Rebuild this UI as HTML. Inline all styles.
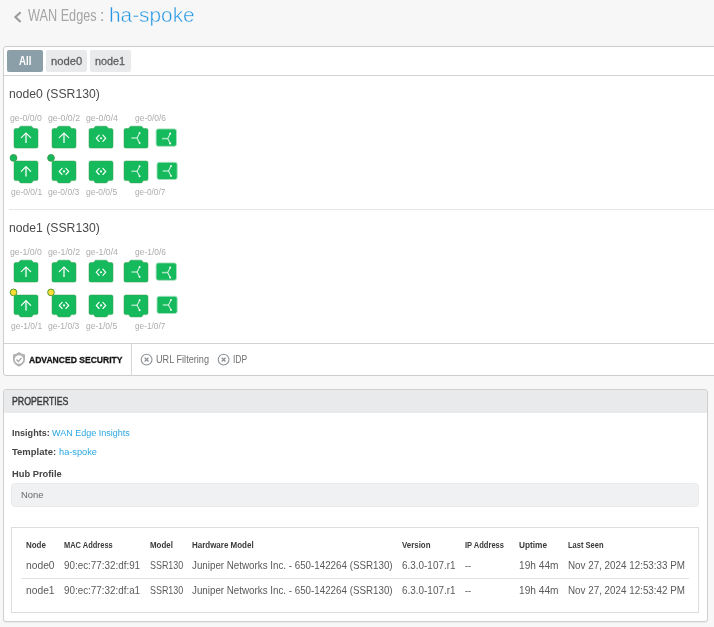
<!DOCTYPE html>
<html><head><meta charset="utf-8"><title>WAN Edges : ha-spoke</title>
<style>
html,body{margin:0;padding:0;}
body{width:714px;height:627px;overflow:hidden;background:#f7f7f7;position:relative;font-family:"Liberation Sans",sans-serif;}
.abs{position:absolute;}
.t{position:absolute;white-space:pre;line-height:1;transform-origin:0 0;font-family:"Liberation Sans",sans-serif;}
.panel1{left:3px;top:46px;width:720px;height:330px;background:#fff;border:1px solid #cdcdcd;border-radius:3px;box-sizing:border-box;}
.hl{position:absolute;height:1px;background:#d0d0d0;}
.tab{position:absolute;top:50px;height:22px;border-radius:2px;background:#e9eaeb;}
.panel2{left:3px;top:389px;width:705px;height:233px;background:#fff;border:1px solid #cfcfcf;border-radius:3px;box-sizing:border-box;box-shadow:0 1px 1px rgba(0,0,0,0.05);}
.phead{left:4px;top:390px;width:703px;height:23px;background:#e9eaec;border-radius:2px 2px 0 0;}
.field{left:11px;top:483px;width:688px;height:24px;background:#f0f1f2;border:1px solid #ebebeb;border-radius:4px;box-sizing:border-box;}
.tbl{left:11px;top:527px;width:688px;height:86px;border:1px solid #dedede;box-sizing:border-box;background:#fff;}
</style></head><body>
<div class="abs panel1"></div>
<div class="hl" style="left:4px;top:75px;width:710px;background:#d2d2d2;"></div>
<div class="tab" style="left:7px;width:36px;background:#8b9fa9;"></div>
<div class="tab" style="left:46px;width:41px;"></div>
<div class="tab" style="left:90px;width:41px;"></div>
<div class="hl" style="left:9px;top:209px;width:705px;background:#e6e6e6;"></div>
<div class="hl" style="left:4px;top:343px;width:710px;background:#d2d2d2;"></div>
<div class="abs" style="left:131px;top:344px;width:1px;height:32px;background:#d6d6d6;"></div>
<div class="abs panel2"></div>
<div class="abs phead"></div>
<div class="abs field"></div>
<div class="abs tbl"></div>
<div class="hl" style="left:21px;top:578px;width:668px;background:#e2e2e2;"></div>
<svg class="abs" style="left:0;top:0" width="714" height="627" viewBox="0 0 714 627">
<path transform="translate(14,126.2)" d="M0,4 Q0,2.3 1.7,2.3 L4.6,2.3 L5.7,0.7 Q6.1,0 7,0 L17,0 Q17.9,0 18.3,0.7 L19.4,2.3 L22.3,2.3 Q24,2.3 24,4 L24,20.2 Q24,21.9 22.3,21.9 L1.7,21.9 Q0,21.9 0,20.2 Z" fill="#15ba5c" stroke="#3d9e55" stroke-width="0.5"/>
<path transform="translate(52,126.2)" d="M0,4 Q0,2.3 1.7,2.3 L4.6,2.3 L5.7,0.7 Q6.1,0 7,0 L17,0 Q17.9,0 18.3,0.7 L19.4,2.3 L22.3,2.3 Q24,2.3 24,4 L24,20.2 Q24,21.9 22.3,21.9 L1.7,21.9 Q0,21.9 0,20.2 Z" fill="#15ba5c" stroke="#3d9e55" stroke-width="0.5"/>
<path transform="translate(89,126.2)" d="M0,4 Q0,2.3 1.7,2.3 L4.6,2.3 L5.7,0.7 Q6.1,0 7,0 L17,0 Q17.9,0 18.3,0.7 L19.4,2.3 L22.3,2.3 Q24,2.3 24,4 L24,20.2 Q24,21.9 22.3,21.9 L1.7,21.9 Q0,21.9 0,20.2 Z" fill="#15ba5c" stroke="#3d9e55" stroke-width="0.5"/>
<path transform="translate(124,126.2)" d="M0,4 Q0,2.3 1.7,2.3 L4.6,2.3 L5.7,0.7 Q6.1,0 7,0 L17,0 Q17.9,0 18.3,0.7 L19.4,2.3 L22.3,2.3 Q24,2.3 24,4 L24,20.2 Q24,21.9 22.3,21.9 L1.7,21.9 Q0,21.9 0,20.2 Z" fill="#15ba5c" stroke="#3d9e55" stroke-width="0.5"/>
<path transform="translate(14,182.9) scale(1,-1)" d="M0,4 Q0,2.3 1.7,2.3 L4.6,2.3 L5.7,0.7 Q6.1,0 7,0 L17,0 Q17.9,0 18.3,0.7 L19.4,2.3 L22.3,2.3 Q24,2.3 24,4 L24,20.2 Q24,21.9 22.3,21.9 L1.7,21.9 Q0,21.9 0,20.2 Z" fill="#15ba5c" stroke="#3d9e55" stroke-width="0.5"/>
<path transform="translate(52,182.9) scale(1,-1)" d="M0,4 Q0,2.3 1.7,2.3 L4.6,2.3 L5.7,0.7 Q6.1,0 7,0 L17,0 Q17.9,0 18.3,0.7 L19.4,2.3 L22.3,2.3 Q24,2.3 24,4 L24,20.2 Q24,21.9 22.3,21.9 L1.7,21.9 Q0,21.9 0,20.2 Z" fill="#15ba5c" stroke="#3d9e55" stroke-width="0.5"/>
<path transform="translate(89,182.9) scale(1,-1)" d="M0,4 Q0,2.3 1.7,2.3 L4.6,2.3 L5.7,0.7 Q6.1,0 7,0 L17,0 Q17.9,0 18.3,0.7 L19.4,2.3 L22.3,2.3 Q24,2.3 24,4 L24,20.2 Q24,21.9 22.3,21.9 L1.7,21.9 Q0,21.9 0,20.2 Z" fill="#15ba5c" stroke="#3d9e55" stroke-width="0.5"/>
<path transform="translate(124,182.9) scale(1,-1)" d="M0,4 Q0,2.3 1.7,2.3 L4.6,2.3 L5.7,0.7 Q6.1,0 7,0 L17,0 Q17.9,0 18.3,0.7 L19.4,2.3 L22.3,2.3 Q24,2.3 24,4 L24,20.2 Q24,21.9 22.3,21.9 L1.7,21.9 Q0,21.9 0,20.2 Z" fill="#15ba5c" stroke="#3d9e55" stroke-width="0.5"/>
<rect x="156.1" y="128.9" width="20.4" height="17.4" rx="2.2" fill="#15ba5c" stroke="#a5dfbd" stroke-width="0.9"/>
<rect x="157" y="162.3" width="20.2" height="17.2" rx="2.2" fill="#15ba5c" stroke="#a5dfbd" stroke-width="0.9"/>
<path d="M26,133.4 L26,143.0" stroke="#ffffff" stroke-opacity="0.62" stroke-width="2.1" fill="none"/><path d="M21.3,137.7 L26,133.0 L30.7,137.7" stroke="#fff" stroke-width="1.15" fill="none" stroke-linecap="round"/>
<path d="M64,133.4 L64,143.0" stroke="#ffffff" stroke-opacity="0.62" stroke-width="2.1" fill="none"/><path d="M59.3,137.7 L64,133.0 L68.7,137.7" stroke="#fff" stroke-width="1.15" fill="none" stroke-linecap="round"/>
<path d="M99.1,135.1 L96.3,138.2 L99.1,141.29999999999998 M102.9,135.1 L105.7,138.2 L102.9,141.29999999999998" stroke="#fff" stroke-width="1.15" fill="none" stroke-linecap="round"/><circle cx="101" cy="138.2" r="1.05" fill="#fff"/>
<path d="M131.4,138.0 L137.1,138.0" stroke="#fff" stroke-opacity="0.62" stroke-width="1.5" fill="none"/><path d="M139.6,133.1 L137.1,138.0 L139.6,142.9" stroke="#fff" stroke-opacity="0.8" stroke-width="1.05" fill="none"/><circle cx="139.6" cy="132.9" r="0.95" fill="#fff"/><circle cx="139.6" cy="142.9" r="0.95" fill="#fff"/>
<path d="M162.0,138.6 L167.7,138.6" stroke="#fff" stroke-opacity="0.62" stroke-width="1.5" fill="none"/><path d="M170.2,133.7 L167.7,138.6 L170.2,143.5" stroke="#fff" stroke-opacity="0.8" stroke-width="1.05" fill="none"/><circle cx="170.2" cy="133.5" r="0.95" fill="#fff"/><circle cx="170.2" cy="143.5" r="0.95" fill="#fff"/>
<path d="M26,167.0 L26,176.6" stroke="#ffffff" stroke-opacity="0.62" stroke-width="2.1" fill="none"/><path d="M21.3,171.29999999999998 L26,166.6 L30.7,171.29999999999998" stroke="#fff" stroke-width="1.15" fill="none" stroke-linecap="round"/>
<path d="M62.1,168.3 L59.3,171.4 L62.1,174.5 M65.9,168.3 L68.7,171.4 L65.9,174.5" stroke="#fff" stroke-width="1.15" fill="none" stroke-linecap="round"/><circle cx="64" cy="171.4" r="1.05" fill="#fff"/>
<path d="M99.1,168.3 L96.3,171.4 L99.1,174.5 M102.9,168.3 L105.7,171.4 L102.9,174.5" stroke="#fff" stroke-width="1.15" fill="none" stroke-linecap="round"/><circle cx="101" cy="171.4" r="1.05" fill="#fff"/>
<path d="M131.4,171.3 L137.1,171.3" stroke="#fff" stroke-opacity="0.62" stroke-width="1.5" fill="none"/><path d="M139.6,166.4 L137.1,171.3 L139.6,176.20000000000002" stroke="#fff" stroke-opacity="0.8" stroke-width="1.05" fill="none"/><circle cx="139.6" cy="166.20000000000002" r="0.95" fill="#fff"/><circle cx="139.6" cy="176.20000000000002" r="0.95" fill="#fff"/>
<path d="M162.8,171 L168.5,171" stroke="#fff" stroke-opacity="0.62" stroke-width="1.5" fill="none"/><path d="M171.0,166.1 L168.5,171 L171.0,175.9" stroke="#fff" stroke-opacity="0.8" stroke-width="1.05" fill="none"/><circle cx="171.0" cy="165.9" r="0.95" fill="#fff"/><circle cx="171.0" cy="175.9" r="0.95" fill="#fff"/>
<circle cx="13.5" cy="157.9" r="3.35" fill="#15ba5c" stroke="#3f9a4f" stroke-width="1"/>
<circle cx="51" cy="157.9" r="3.35" fill="#15ba5c" stroke="#3f9a4f" stroke-width="1"/>
<path transform="translate(14,260.2)" d="M0,4 Q0,2.3 1.7,2.3 L4.6,2.3 L5.7,0.7 Q6.1,0 7,0 L17,0 Q17.9,0 18.3,0.7 L19.4,2.3 L22.3,2.3 Q24,2.3 24,4 L24,20.2 Q24,21.9 22.3,21.9 L1.7,21.9 Q0,21.9 0,20.2 Z" fill="#15ba5c" stroke="#3d9e55" stroke-width="0.5"/>
<path transform="translate(52,260.2)" d="M0,4 Q0,2.3 1.7,2.3 L4.6,2.3 L5.7,0.7 Q6.1,0 7,0 L17,0 Q17.9,0 18.3,0.7 L19.4,2.3 L22.3,2.3 Q24,2.3 24,4 L24,20.2 Q24,21.9 22.3,21.9 L1.7,21.9 Q0,21.9 0,20.2 Z" fill="#15ba5c" stroke="#3d9e55" stroke-width="0.5"/>
<path transform="translate(89,260.2)" d="M0,4 Q0,2.3 1.7,2.3 L4.6,2.3 L5.7,0.7 Q6.1,0 7,0 L17,0 Q17.9,0 18.3,0.7 L19.4,2.3 L22.3,2.3 Q24,2.3 24,4 L24,20.2 Q24,21.9 22.3,21.9 L1.7,21.9 Q0,21.9 0,20.2 Z" fill="#15ba5c" stroke="#3d9e55" stroke-width="0.5"/>
<path transform="translate(124,260.2)" d="M0,4 Q0,2.3 1.7,2.3 L4.6,2.3 L5.7,0.7 Q6.1,0 7,0 L17,0 Q17.9,0 18.3,0.7 L19.4,2.3 L22.3,2.3 Q24,2.3 24,4 L24,20.2 Q24,21.9 22.3,21.9 L1.7,21.9 Q0,21.9 0,20.2 Z" fill="#15ba5c" stroke="#3d9e55" stroke-width="0.5"/>
<path transform="translate(14,316.9) scale(1,-1)" d="M0,4 Q0,2.3 1.7,2.3 L4.6,2.3 L5.7,0.7 Q6.1,0 7,0 L17,0 Q17.9,0 18.3,0.7 L19.4,2.3 L22.3,2.3 Q24,2.3 24,4 L24,20.2 Q24,21.9 22.3,21.9 L1.7,21.9 Q0,21.9 0,20.2 Z" fill="#15ba5c" stroke="#3d9e55" stroke-width="0.5"/>
<path transform="translate(52,316.9) scale(1,-1)" d="M0,4 Q0,2.3 1.7,2.3 L4.6,2.3 L5.7,0.7 Q6.1,0 7,0 L17,0 Q17.9,0 18.3,0.7 L19.4,2.3 L22.3,2.3 Q24,2.3 24,4 L24,20.2 Q24,21.9 22.3,21.9 L1.7,21.9 Q0,21.9 0,20.2 Z" fill="#15ba5c" stroke="#3d9e55" stroke-width="0.5"/>
<path transform="translate(89,316.9) scale(1,-1)" d="M0,4 Q0,2.3 1.7,2.3 L4.6,2.3 L5.7,0.7 Q6.1,0 7,0 L17,0 Q17.9,0 18.3,0.7 L19.4,2.3 L22.3,2.3 Q24,2.3 24,4 L24,20.2 Q24,21.9 22.3,21.9 L1.7,21.9 Q0,21.9 0,20.2 Z" fill="#15ba5c" stroke="#3d9e55" stroke-width="0.5"/>
<path transform="translate(124,316.9) scale(1,-1)" d="M0,4 Q0,2.3 1.7,2.3 L4.6,2.3 L5.7,0.7 Q6.1,0 7,0 L17,0 Q17.9,0 18.3,0.7 L19.4,2.3 L22.3,2.3 Q24,2.3 24,4 L24,20.2 Q24,21.9 22.3,21.9 L1.7,21.9 Q0,21.9 0,20.2 Z" fill="#15ba5c" stroke="#3d9e55" stroke-width="0.5"/>
<rect x="156.1" y="262.9" width="20.4" height="17.4" rx="2.2" fill="#15ba5c" stroke="#a5dfbd" stroke-width="0.9"/>
<rect x="157" y="296.3" width="20.2" height="17.2" rx="2.2" fill="#15ba5c" stroke="#a5dfbd" stroke-width="0.9"/>
<path d="M26,267.4 L26,277.0" stroke="#ffffff" stroke-opacity="0.62" stroke-width="2.1" fill="none"/><path d="M21.3,271.7 L26,267.0 L30.7,271.7" stroke="#fff" stroke-width="1.15" fill="none" stroke-linecap="round"/>
<path d="M64,267.4 L64,277.0" stroke="#ffffff" stroke-opacity="0.62" stroke-width="2.1" fill="none"/><path d="M59.3,271.7 L64,267.0 L68.7,271.7" stroke="#fff" stroke-width="1.15" fill="none" stroke-linecap="round"/>
<path d="M99.1,269.09999999999997 L96.3,272.2 L99.1,275.3 M102.9,269.09999999999997 L105.7,272.2 L102.9,275.3" stroke="#fff" stroke-width="1.15" fill="none" stroke-linecap="round"/><circle cx="101" cy="272.2" r="1.05" fill="#fff"/>
<path d="M131.4,272.0 L137.1,272.0" stroke="#fff" stroke-opacity="0.62" stroke-width="1.5" fill="none"/><path d="M139.6,267.1 L137.1,272.0 L139.6,276.9" stroke="#fff" stroke-opacity="0.8" stroke-width="1.05" fill="none"/><circle cx="139.6" cy="266.9" r="0.95" fill="#fff"/><circle cx="139.6" cy="276.9" r="0.95" fill="#fff"/>
<path d="M162.0,272.59999999999997 L167.7,272.59999999999997" stroke="#fff" stroke-opacity="0.62" stroke-width="1.5" fill="none"/><path d="M170.2,267.7 L167.7,272.59999999999997 L170.2,277.49999999999994" stroke="#fff" stroke-opacity="0.8" stroke-width="1.05" fill="none"/><circle cx="170.2" cy="267.49999999999994" r="0.95" fill="#fff"/><circle cx="170.2" cy="277.49999999999994" r="0.95" fill="#fff"/>
<path d="M26,301.0 L26,310.6" stroke="#ffffff" stroke-opacity="0.62" stroke-width="2.1" fill="none"/><path d="M21.3,305.3 L26,300.6 L30.7,305.3" stroke="#fff" stroke-width="1.15" fill="none" stroke-linecap="round"/>
<path d="M62.1,302.29999999999995 L59.3,305.4 L62.1,308.5 M65.9,302.29999999999995 L68.7,305.4 L65.9,308.5" stroke="#fff" stroke-width="1.15" fill="none" stroke-linecap="round"/><circle cx="64" cy="305.4" r="1.05" fill="#fff"/>
<path d="M99.1,302.29999999999995 L96.3,305.4 L99.1,308.5 M102.9,302.29999999999995 L105.7,305.4 L102.9,308.5" stroke="#fff" stroke-width="1.15" fill="none" stroke-linecap="round"/><circle cx="101" cy="305.4" r="1.05" fill="#fff"/>
<path d="M131.4,305.3 L137.1,305.3" stroke="#fff" stroke-opacity="0.62" stroke-width="1.5" fill="none"/><path d="M139.6,300.40000000000003 L137.1,305.3 L139.6,310.2" stroke="#fff" stroke-opacity="0.8" stroke-width="1.05" fill="none"/><circle cx="139.6" cy="300.2" r="0.95" fill="#fff"/><circle cx="139.6" cy="310.2" r="0.95" fill="#fff"/>
<path d="M162.8,305 L168.5,305" stroke="#fff" stroke-opacity="0.62" stroke-width="1.5" fill="none"/><path d="M171.0,300.1 L168.5,305 L171.0,309.9" stroke="#fff" stroke-opacity="0.8" stroke-width="1.05" fill="none"/><circle cx="171.0" cy="299.9" r="0.95" fill="#fff"/><circle cx="171.0" cy="309.9" r="0.95" fill="#fff"/>
<circle cx="13.5" cy="292.4" r="3.35" fill="#fbdc33" stroke="#559c38" stroke-width="1"/>
<circle cx="51" cy="292.4" r="3.35" fill="#fbdc33" stroke="#559c38" stroke-width="1"/>
</svg>

<svg class="abs" style="left:13px;top:10px" width="10" height="14" viewBox="0 0 10 14"><path d="M7.6,2.2 L2.4,7.1 L7.6,12" stroke="#9a9a9a" stroke-width="2.1" fill="none"/></svg>
<svg class="abs" style="left:11px;top:350px" width="16" height="18" viewBox="0 0 16 18"><path d="M8,2.1 Q10.6,4.3 14,4.4 L14,9.4 Q14,13.8 8,16.8 Q2,13.8 2,9.4 L2,4.4 Q5.4,4.3 8,2.1 Z" fill="#b2b2b2"/><circle cx="8" cy="9.4" r="4.25" fill="#fff"/><path d="M5.5,9.5 L7.3,11.4 L10.6,7.9" stroke="#a6a6a6" stroke-width="1.35" fill="none"/></svg>
<svg class="abs" style="left:140px;top:353px" width="14" height="14" viewBox="0 0 14 14"><circle cx="6.6" cy="6.6" r="5.4" fill="none" stroke="#8d9398" stroke-width="1.1"/><path d="M4.7,4.7 L8.5,8.5 M8.5,4.7 L4.7,8.5" stroke="#8a9096" stroke-width="1.25"/></svg>
<svg class="abs" style="left:217px;top:353px" width="14" height="14" viewBox="0 0 14 14"><circle cx="6.6" cy="6.6" r="5.4" fill="none" stroke="#8d9398" stroke-width="1.1"/><path d="M4.7,4.7 L8.5,8.5 M8.5,4.7 L4.7,8.5" stroke="#8a9096" stroke-width="1.25"/></svg>

<div id="txt" style="position:absolute;left:0;top:0;width:714px;height:627px;will-change:transform;">
<span class="t" id="t0" style="left:28.40px;top:7.80px;font-size:16px;font-weight:400;color:#a6a6a6;transform:scaleX(0.7926);">WAN Edges</span>
<span class="t" id="t1" style="left:100.20px;top:7.80px;font-size:15.6px;font-weight:400;color:#9c9c9c;transform:scaleX(1.0129);">:</span>
<span class="t" id="t2" style="left:108.90px;top:5.70px;font-size:19.8px;font-weight:400;color:#2496e3;transform:scaleX(1.0529);-webkit-text-stroke:0.45px #f7f7f7;">ha-spoke</span>
<span class="t" id="t3" style="left:18.60px;top:55.90px;font-size:11.9px;font-weight:700;color:#ffffff;transform:scaleX(0.8156);">All</span>
<span class="t" id="t4" style="left:51.20px;top:55.90px;font-size:11.8px;font-weight:400;color:#5e5e5e;transform:scaleX(0.9509);-webkit-text-stroke:0.3px #5e5e5e;">node0</span>
<span class="t" id="t5" style="left:94.90px;top:55.90px;font-size:11.8px;font-weight:400;color:#5e5e5e;transform:scaleX(0.9143);-webkit-text-stroke:0.3px #5e5e5e;">node1</span>
<span class="t" id="t6" style="left:9.20px;top:87.20px;font-size:13.5px;font-weight:400;color:#4a4a4a;transform:scaleX(0.9028);">node0 (SSR130)</span>
<span class="t" id="t7" style="left:9.20px;top:221.20px;font-size:13.5px;font-weight:400;color:#4a4a4a;transform:scaleX(0.9028);">node1 (SSR130)</span>
<span class="t" id="t8" style="left:10.30px;top:112.70px;font-size:9.5px;font-weight:400;color:#acacac;transform:scaleX(0.9118);">ge-0/0/0</span>
<span class="t" id="t9" style="left:10.50px;top:186.90px;font-size:9.5px;font-weight:400;color:#acacac;transform:scaleX(0.8918);">ge-0/0/1</span>
<span class="t" id="t10" style="left:48.00px;top:112.70px;font-size:9.5px;font-weight:400;color:#acacac;transform:scaleX(0.9176);">ge-0/0/2</span>
<span class="t" id="t11" style="left:48.20px;top:186.90px;font-size:9.5px;font-weight:400;color:#acacac;transform:scaleX(0.8975);">ge-0/0/3</span>
<span class="t" id="t12" style="left:85.60px;top:112.70px;font-size:9.5px;font-weight:400;color:#acacac;transform:scaleX(0.9147);">ge-0/0/4</span>
<span class="t" id="t13" style="left:85.80px;top:186.90px;font-size:9.5px;font-weight:400;color:#acacac;transform:scaleX(0.8946);">ge-0/0/5</span>
<span class="t" id="t14" style="left:135.00px;top:112.70px;font-size:9.5px;font-weight:400;color:#acacac;transform:scaleX(0.8889);">ge-0/0/6</span>
<span class="t" id="t15" style="left:135.20px;top:186.90px;font-size:9.5px;font-weight:400;color:#acacac;transform:scaleX(0.8688);">ge-0/0/7</span>
<span class="t" id="t16" style="left:10.30px;top:246.70px;font-size:9.5px;font-weight:400;color:#acacac;transform:scaleX(0.9118);">ge-1/0/0</span>
<span class="t" id="t17" style="left:10.50px;top:320.90px;font-size:9.5px;font-weight:400;color:#acacac;transform:scaleX(0.8918);">ge-1/0/1</span>
<span class="t" id="t18" style="left:48.00px;top:246.70px;font-size:9.5px;font-weight:400;color:#acacac;transform:scaleX(0.9176);">ge-1/0/2</span>
<span class="t" id="t19" style="left:48.20px;top:320.90px;font-size:9.5px;font-weight:400;color:#acacac;transform:scaleX(0.8975);">ge-1/0/3</span>
<span class="t" id="t20" style="left:85.60px;top:246.70px;font-size:9.5px;font-weight:400;color:#acacac;transform:scaleX(0.9147);">ge-1/0/4</span>
<span class="t" id="t21" style="left:85.80px;top:320.90px;font-size:9.5px;font-weight:400;color:#acacac;transform:scaleX(0.8946);">ge-1/0/5</span>
<span class="t" id="t22" style="left:135.00px;top:246.70px;font-size:9.5px;font-weight:400;color:#acacac;transform:scaleX(0.8889);">ge-1/0/6</span>
<span class="t" id="t23" style="left:135.20px;top:320.90px;font-size:9.5px;font-weight:400;color:#acacac;transform:scaleX(0.8688);">ge-1/0/7</span>
<span class="t" id="t24" style="left:29.00px;top:356.00px;font-size:9.3px;font-weight:700;color:#161616;transform:scaleX(0.9203);-webkit-text-stroke:0.3px #161616;">ADVANCED SECURITY</span>
<span class="t" id="t25" style="left:156.00px;top:354.00px;font-size:10.6px;font-weight:400;color:#707070;transform:scaleX(0.8629);">URL Filtering</span>
<span class="t" id="t26" style="left:232.80px;top:354.00px;font-size:10.6px;font-weight:400;color:#707070;transform:scaleX(0.8035);">IDP</span>
<span class="t" id="t27" style="left:11.80px;top:396.00px;font-size:11.2px;font-weight:400;color:#3c3c3c;transform:scaleX(0.7842);-webkit-text-stroke:0.45px #3c3c3c;">PROPERTIES</span>
<span class="t" id="t28" style="left:11.60px;top:427.90px;font-size:9.6px;font-weight:700;color:#444;transform:scaleX(0.9454);">Insights:</span>
<span class="t" id="t29" style="left:52.20px;top:427.90px;font-size:9.6px;font-weight:400;color:#2aa7e0;transform:scaleX(0.9393);">WAN Edge Insights</span>
<span class="t" id="t30" style="left:11.60px;top:446.80px;font-size:9.6px;font-weight:700;color:#444;transform:scaleX(0.9886);">Template:</span>
<span class="t" id="t31" style="left:58.50px;top:446.80px;font-size:9.6px;font-weight:400;color:#2aa7e0;transform:scaleX(0.9628);">ha-spoke</span>
<span class="t" id="t32" style="left:11.60px;top:468.70px;font-size:9.6px;font-weight:700;color:#444;transform:scaleX(0.9712);">Hub Profile</span>
<span class="t" id="t33" style="left:21.40px;top:489.60px;font-size:9.8px;font-weight:400;color:#6a6a6a;transform:scaleX(0.9649);">None</span>
<span class="t" id="t34" style="left:26.30px;top:540.90px;font-size:9.2px;font-weight:700;color:#3a3a3a;transform:scaleX(0.8664);">Node</span>
<span class="t" id="t35" style="left:63.90px;top:540.90px;font-size:9.2px;font-weight:700;color:#3a3a3a;transform:scaleX(0.8129);">MAC Address</span>
<span class="t" id="t36" style="left:149.90px;top:540.90px;font-size:9.2px;font-weight:700;color:#3a3a3a;transform:scaleX(0.8626);">Model</span>
<span class="t" id="t37" style="left:192.40px;top:540.90px;font-size:9.2px;font-weight:700;color:#3a3a3a;transform:scaleX(0.8680);">Hardware Model</span>
<span class="t" id="t38" style="left:401.50px;top:540.90px;font-size:9.2px;font-weight:700;color:#3a3a3a;transform:scaleX(0.8584);">Version</span>
<span class="t" id="t39" style="left:464.50px;top:540.90px;font-size:9.2px;font-weight:700;color:#3a3a3a;transform:scaleX(0.8211);">IP Address</span>
<span class="t" id="t40" style="left:518.50px;top:540.90px;font-size:9.2px;font-weight:700;color:#3a3a3a;transform:scaleX(0.8991);">Uptime</span>
<span class="t" id="t41" style="left:567.50px;top:540.90px;font-size:9.2px;font-weight:700;color:#3a3a3a;transform:scaleX(0.8179);">Last Seen</span>
<span class="t" id="t42" style="left:26.30px;top:559.90px;font-size:11.2px;font-weight:400;color:#5a5a5a;transform:scaleX(0.9189);">node0</span>
<span class="t" id="t43" style="left:63.90px;top:559.90px;font-size:11.2px;font-weight:400;color:#5a5a5a;transform:scaleX(0.8801);">90:ec:77:32:df:91</span>
<span class="t" id="t44" style="left:150.00px;top:559.90px;font-size:11.2px;font-weight:400;color:#5a5a5a;transform:scaleX(0.7967);">SSR130</span>
<span class="t" id="t45" style="left:191.80px;top:559.90px;font-size:11.2px;font-weight:400;color:#5a5a5a;transform:scaleX(0.8742);">Juniper Networks Inc. - 650-142264 (SSR130)</span>
<span class="t" id="t46" style="left:401.50px;top:559.90px;font-size:11.2px;font-weight:400;color:#5a5a5a;transform:scaleX(0.8866);">6.3.0-107.r1</span>
<span class="t" id="t47" style="left:464.50px;top:559.90px;font-size:11.2px;font-weight:400;color:#5a5a5a;transform:scaleX(0.8050);">--</span>
<span class="t" id="t48" style="left:518.50px;top:559.90px;font-size:11.2px;font-weight:400;color:#5a5a5a;transform:scaleX(0.9071);">19h 44m</span>
<span class="t" id="t49" style="left:567.50px;top:559.90px;font-size:11.2px;font-weight:400;color:#5a5a5a;transform:scaleX(0.8790);">Nov 27, 2024 12:53:33 PM</span>
<span class="t" id="t50" style="left:26.30px;top:584.80px;font-size:11.2px;font-weight:400;color:#5a5a5a;transform:scaleX(0.9189);">node1</span>
<span class="t" id="t51" style="left:63.90px;top:584.80px;font-size:11.2px;font-weight:400;color:#5a5a5a;transform:scaleX(0.8801);">90:ec:77:32:df:a1</span>
<span class="t" id="t52" style="left:150.00px;top:584.80px;font-size:11.2px;font-weight:400;color:#5a5a5a;transform:scaleX(0.7967);">SSR130</span>
<span class="t" id="t53" style="left:191.80px;top:584.80px;font-size:11.2px;font-weight:400;color:#5a5a5a;transform:scaleX(0.8742);">Juniper Networks Inc. - 650-142264 (SSR130)</span>
<span class="t" id="t54" style="left:401.50px;top:584.80px;font-size:11.2px;font-weight:400;color:#5a5a5a;transform:scaleX(0.8866);">6.3.0-107.r1</span>
<span class="t" id="t55" style="left:464.50px;top:584.80px;font-size:11.2px;font-weight:400;color:#5a5a5a;transform:scaleX(0.8050);">--</span>
<span class="t" id="t56" style="left:518.50px;top:584.80px;font-size:11.2px;font-weight:400;color:#5a5a5a;transform:scaleX(0.9071);">19h 44m</span>
<span class="t" id="t57" style="left:567.50px;top:584.80px;font-size:11.2px;font-weight:400;color:#5a5a5a;transform:scaleX(0.8790);">Nov 27, 2024 12:53:42 PM</span>
</div>
</body></html>
